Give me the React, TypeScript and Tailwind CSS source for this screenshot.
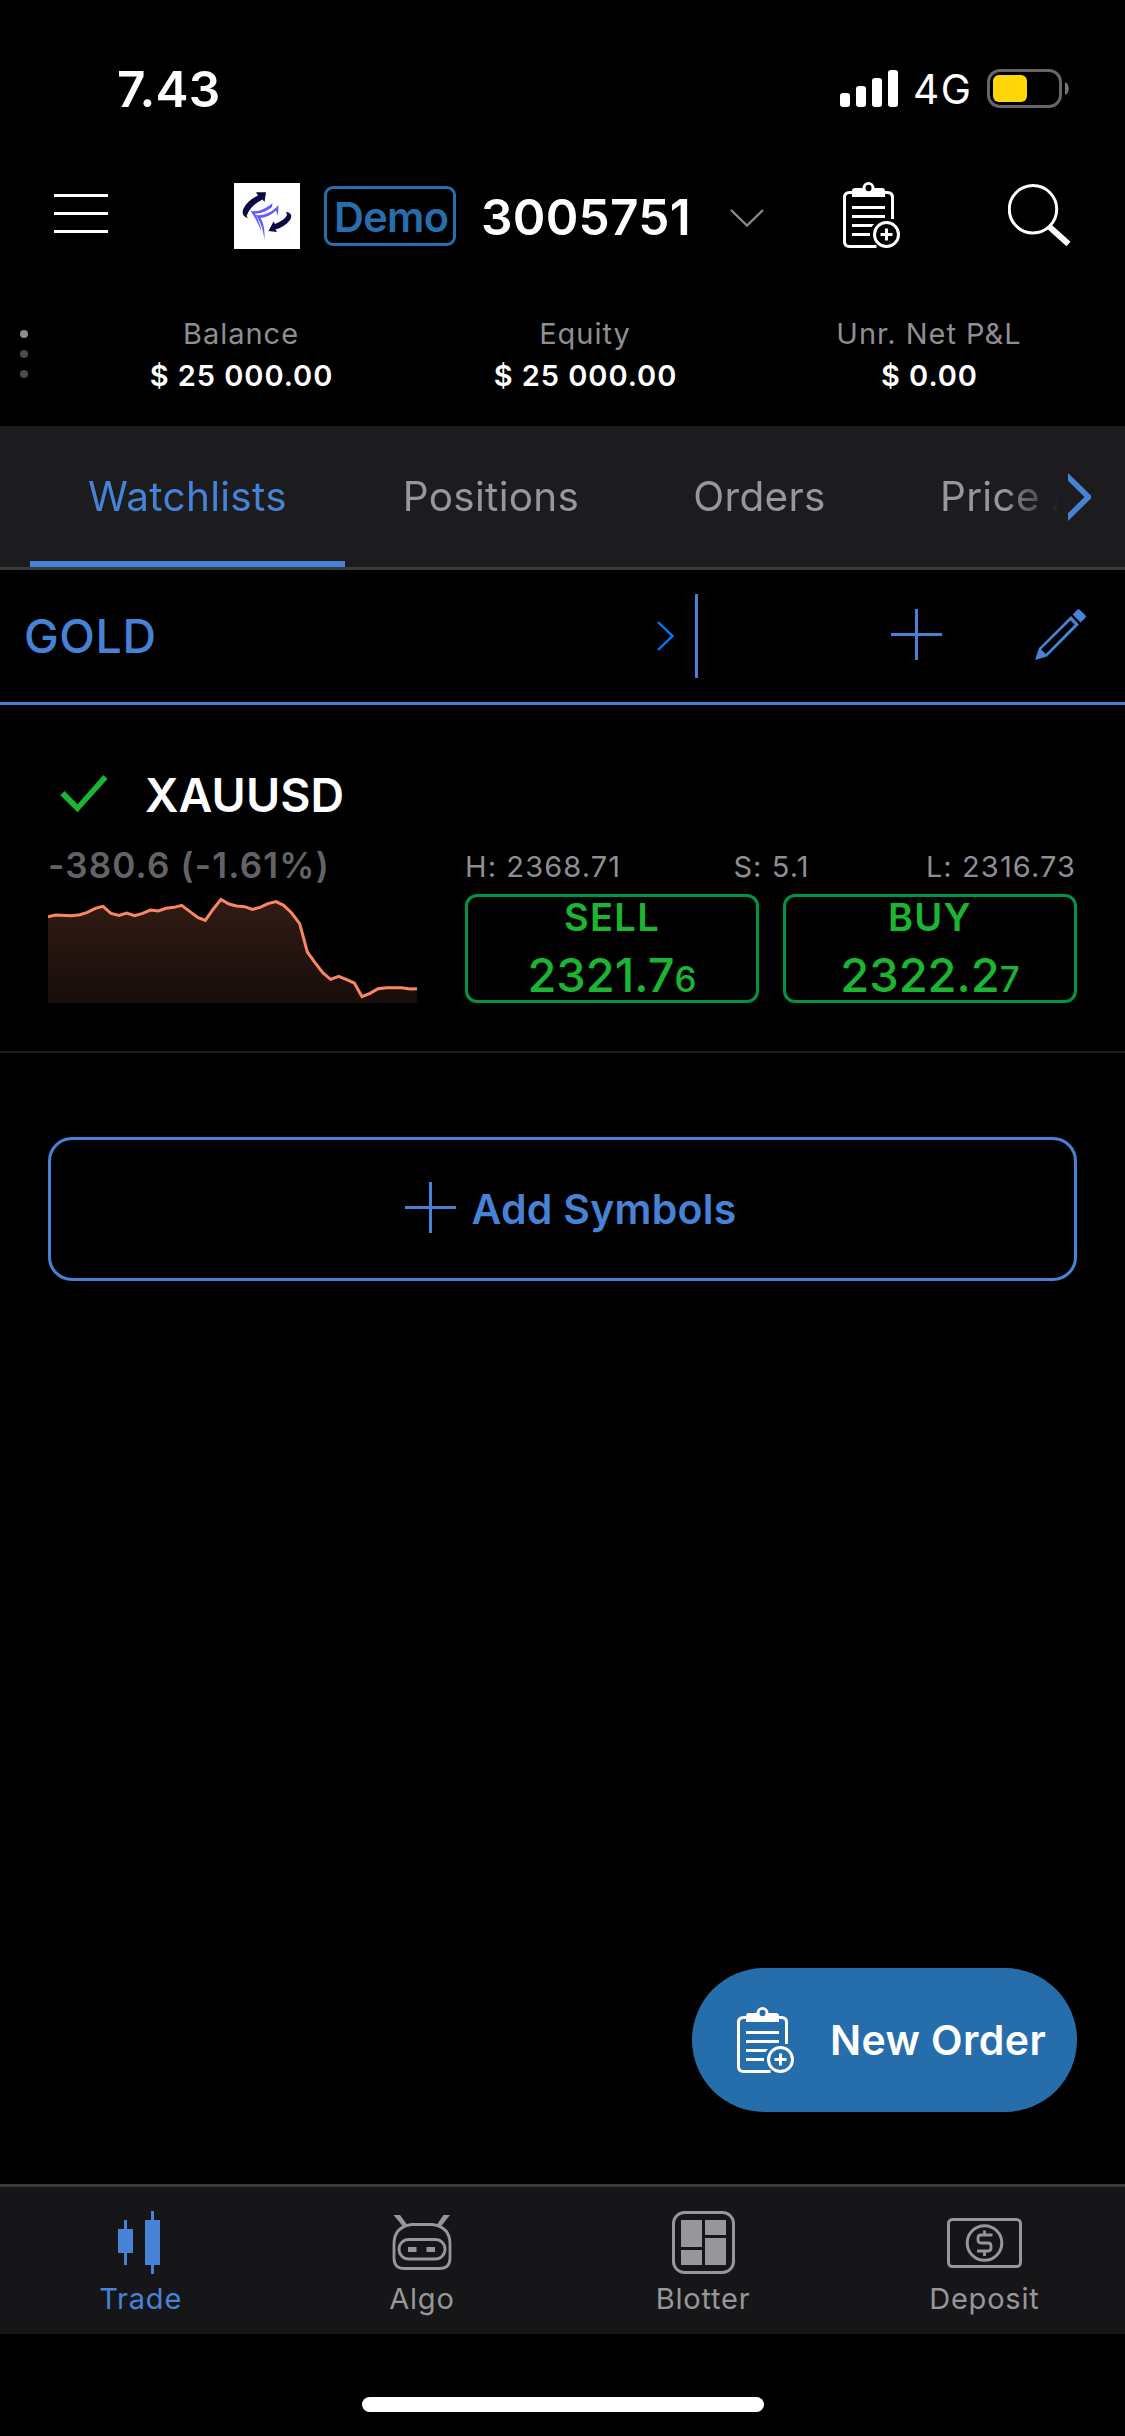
import type { ReactNode } from "react";

const accountInfo = [
    { label: "Balance", value: "$ 25 000.00" },
    { label: "Equity", value: "$ 25 000.00" },
    { label: "Unr. Net P&L", value: "$ 0.00" },
];

function ClipboardIcon() {
    return (
        <svg width="57" height="66" viewBox="0 0 57 66" fill="none" stroke="currentColor" strokeWidth="3" className="shrink-0">
            <path d="M9 10.5H6.5Q1.5 10.5 1.5 15.5V59.5Q1.5 64.5 6.5 64.5H33.5M42 10.5H44.5Q49.5 10.5 49.5 15.5V37" />
            <path d="M9 15V9Q9 6 12 6H39Q42 6 42 9V15Z" fill="currentColor" stroke="none" />
            <circle cx="25.5" cy="6" r="6" fill="currentColor" stroke="none" />
            <ellipse cx="25.5" cy="6" rx="3" ry="3.2" className="fill-black group-data-fab:fill-[#266dab]" stroke="none" />
            <path d="M9 25.5H42M9 34.5H42M9 52.5H27" />
            <path d="M9 42H31L28.5 45H9Z" fill="currentColor" stroke="none" />
            <circle cx="43.5" cy="52.5" r="12" />
            <path d="M37.5 52.5H49.5M43.5 46.5V58.5" />
        </svg>
    );
}

function PlusIcon() {
    return (
        <svg width="51" height="51" viewBox="0 0 51 51" stroke="currentColor" strokeWidth="3" className="mb-[3px] shrink-0">
            <path d="M0 25.5H51M25.5 0V51" />
        </svg>
    );
}

function BrokerLogo() {
    return (
        <svg width="66" height="66" viewBox="0 0 66 66" className="ml-[126px] shrink-0 bg-white">
            <path d="M22 9.3H32L30.5 19L28.5 16.5C20 21 15.5 26 13.5 31L12.5 33L14 35C9 34 7.5 30 9.5 25.5C12.5 19.5 18 15.5 24 12.5Z" fill="#0c0a45" />
            <path d="M34.5 48L39.5 38.5L41 41C47 38.5 52.5 35 53 31.5L52 29C57.5 29.5 58.5 33 56 37C52 42 47.5 45 41.5 46.5L43 49Z" fill="#0c0a45" />
            <path d="M16.5 28C24 29 31 26.5 38.5 20L38 24C33 28 28 30.5 21 30.5C24 36 26.5 42 27.5 49C24.5 41 21 34 16.5 28Z" fill="#635bff" />
            <path d="M21.5 32C31 33 38 29 44.5 22L44 33L42 27.5C37.5 32 32 34.5 26.5 35C29 39 31 45 30.5 57C29 46 26.5 38 21.5 32Z" fill="#635bff" />
        </svg>
    );
}

function StatusBar() {
    return (
        <div className="flex h-[177px] items-center pl-[117px]">
            <p className="mt-px w-[723px] text-[49.5px] font-semibold tracking-[0.2px]">7.43</p>
            <svg width="58" height="37" viewBox="0 0 58 37" fill="#fff">
                <rect x="0" y="23" width="10" height="14" rx="3" />
                <rect x="16" y="16" width="10" height="21" rx="3" />
                <rect x="32" y="8" width="10" height="29" rx="3" />
                <rect x="48" y="0" width="10" height="37" rx="3" />
            </svg>
            <p className="mt-[4px] ml-[15px] w-[74px] text-[40.5px] tracking-[1.5px]">4G</p>
            <svg width="82" height="39" viewBox="0 0 82 39">
                <rect x="1.5" y="1.5" width="72" height="36" rx="11.5" fill="none" stroke="#666" strokeWidth="3" />
                <rect x="6" y="6" width="34" height="27" rx="6" fill="#ffd60a" />
                <path d="M78 13C83 15 83 24 78 26Z" fill="#777" />
            </svg>
        </div>
    );
}

function Header() {
    return (
        <div className="flex h-[78px] items-center pl-[54px]">
            <div className="mb-[5px] flex w-[54px] flex-col gap-[15px]">
                <span className="h-[3px] bg-white" />
                <span className="h-[3px] bg-white" />
                <span className="h-[3px] bg-white" />
            </div>
            <BrokerLogo />
            <div className="ml-6 flex h-[60px] w-[132px] items-center rounded-[9px] border-[3px] border-[#276eac] pt-[2px] pl-[7px] text-[41.5px] font-semibold tracking-[-0.7px] text-[#276eac]">
                Demo
            </div>
            <p className="mt-[2px] ml-[25px] w-[249px] text-[49.5px] font-semibold tracking-[0.27px]">3005751</p>
            <svg width="34" height="18" viewBox="0 0 34 18" fill="none" stroke="#8a8a8a" strokeWidth="2.4" className="mt-[4px]">
                <path d="M1 1L17 16.5L33 1" />
            </svg>
            <div className="mb-[2px] ml-[79px]">
                <ClipboardIcon />
            </div>
            <svg width="63" height="62" viewBox="0 0 63 62" fill="none" stroke="#fff" className="mb-[2px] ml-[108px]">
                <circle cx="25" cy="25.3" r="23.7" strokeWidth="3" />
                <path d="M40.5 42L60.5 60" strokeWidth="6" />
            </svg>
        </div>
    );
}

function AccountInfo() {
    return (
        <div className="flex h-[171px]">
            <div className="mt-[75px] ml-5 flex w-[49px] flex-col gap-3">
                <span className="size-2 rounded-full bg-[#8e8e8e]" />
                <span className="size-2 rounded-full bg-[#4a4a4a]" />
                <span className="size-2 rounded-full bg-[#4a4a4a]" />
            </div>
            {accountInfo.map((item) => (
                <div key={item.label} className="flex w-[344px] flex-col gap-px pt-[58px] text-center text-[29px] leading-[41px]">
                    <p className="tracking-[1px] text-[#8e8e93]">{item.label}</p>
                    <p className="pl-px font-semibold tracking-[0.95px]">{item.value}</p>
                </div>
            ))}
        </div>
    );
}

function Tabs() {
    return (
        <div className="flex h-[144px] items-center border-b-[3px] border-[#3a3a3c] bg-[#1c1c1e] pl-[30px] text-[40.5px] tracking-[0.3px] text-[#96969b]">
            <div className="flex h-full w-[1032px] overflow-hidden whitespace-nowrap [mask-image:linear-gradient(to_right,black_975px,transparent_1030px)]">
                <div className="flex w-[315px] shrink-0 items-center justify-center border-b-[6px] border-[#4682d6] pt-[8px] text-[#4682d6]">Watchlists</div>
                <div className="flex w-[292px] shrink-0 items-center justify-center pt-[2px]">Positions</div>
                <div className="flex w-[245px] shrink-0 items-center justify-center pt-[2px]">Orders</div>
                <div className="flex shrink-0 items-center pt-[2px] pl-[58px]">Price Alerts</div>
            </div>
            <svg width="23" height="48" viewBox="0 0 23 48" fill="none" stroke="#4682d6" strokeWidth="5.5" className="ml-[6px]">
                <path d="M-3 1L20.5 24L-3 47" />
            </svg>
        </div>
    );
}

function WatchlistBar() {
    return (
        <div className="flex h-[135px] items-center border-b-[3px] border-[#4682d6] pl-[24px] text-[#4682d6]">
            <p className="mt-[2px] w-[633px] text-[46.5px] font-medium tracking-[0.6px]">GOLD</p>
            <svg width="17" height="30" viewBox="0 0 17 30" fill="none" stroke="#007aff" strokeWidth="2.4">
                <path d="M1 1L15.5 15L1 29" />
            </svg>
            <span className="ml-[21px] h-[84px] w-[3px] bg-[#4682d6]" />
            <div className="mr-[93px] ml-[193px]">
                <PlusIcon />
            </div>
            <svg width="51" height="51" viewBox="0 0 51 51" fill="currentColor" className="mb-[3px]">
                <path fillRule="evenodd" d="M0 51L4 39L36 7L44 15.5L12 47.5ZM6 40.5L10.8 45L39.6 15.5L35.5 11.5Z" />
                <path d="M37.6 5.5L42 1Q43.5 -0.5 45 1L50.3 6Q51.5 7.5 50.3 9L45.5 13.4Z" />
            </svg>
        </div>
    );
}

function Sparkline() {
    return (
        <svg width="369" height="109" viewBox="144 222 1107 327" fill="none">
            <defs>
                <linearGradient id="spark" x1="0" y1="0" x2="0" y2="1">
                    <stop offset="0" stopColor="#321b14" />
                    <stop offset="1" stopColor="#180d0a" />
                </linearGradient>
            </defs>
            <path
                d="M144 290L167 285L214 287L240 284L262 277L286 265L309 259L333 280L357 286L380 279L404 287L428 280L451 270L475 273L498 265L522 262L545 256L569 274L593 292L616 301L640 267L663 238L687 252L710 258L734 260L757 268L780 262L804 251L828 245L851 256L875 279L899 311L922 396L945 428L969 459L992 478L1016 469L1040 479L1063 489L1086 530L1110 520L1134 506L1160 503L1205 503L1230 507L1251 506V549H144Z"
                fill="url(#spark)"
            />
            <path
                d="M144 290L167 285L214 287L240 284L262 277L286 265L309 259L333 280L357 286L380 279L404 287L428 280L451 270L475 273L498 265L522 262L545 256L569 274L593 292L616 301L640 267L663 238L687 252L710 258L734 260L757 268L780 262L804 251L828 245L851 256L875 279L899 311L922 396L945 428L969 459L992 478L1016 469L1040 479L1063 489L1086 530L1110 520L1134 506L1160 503L1205 503L1230 507L1251 506"
                stroke="#f98762"
                strokeWidth="9"
            />
        </svg>
    );
}

function PriceButton({ side, price, pip }: { side: string; price: string; pip: string }) {
    return (
        <button className="flex h-[109px] w-[294px] flex-col items-center rounded-xl border-[3px] border-[#009445] text-[#1cb532]">
            <span className="text-[38px] leading-[40px] font-semibold tracking-[1.3px]">{side}</span>
            <span className="mt-[13px] text-[47px] leading-[49px] font-medium">
                {price}
                <span className="text-[35px]">{pip}</span>
            </span>
        </button>
    );
}

function SymbolCard() {
    return (
        <div className="h-[348px] border-b-2 border-[#1c1c1e] pt-[60px]">
            <div className="flex h-[60px] items-center pl-[60px]">
                <svg width="48" height="38" viewBox="0 0 48 38" fill="#1cb532" className="mb-[2px]">
                    <path d="M4.6 16L17.5 29.3L43.4 0L47.5 4L17.5 37.3L0.3 20.3Z" />
                </svg>
                <p className="mt-[2px] ml-[37px] text-[46.5px] font-semibold tracking-[0.1px]">XAUUSD</p>
            </div>
            <div className="flex px-12">
                <div className="w-[369px]">
                    <p className="flex h-[69px] items-center pt-[11px] text-[35px] font-semibold tracking-[1.2px] text-[#636366]">-380.6 (-1.61%)</p>
                    <Sparkline />
                </div>
                <div className="ml-12 w-[612px]">
                    <div className="flex h-[69px] items-center justify-between pt-[14px] pr-px text-[29px] tracking-[1.1px] text-[#8e8e93]">
                        <span>H: 2368.71</span>
                        <span className="pr-1">S: 5.1</span>
                        <span>L: 2316.73</span>
                    </div>
                    <div className="flex gap-6">
                        <PriceButton side="SELL" price="2321.7" pip="6" />
                        <PriceButton side="BUY" price="2322.2" pip="7" />
                    </div>
                </div>
            </div>
        </div>
    );
}

function NavItem({ label, active, children }: { label: string; active?: boolean; children: ReactNode }) {
    return (
        <div className={active ? "flex flex-1 flex-col items-center pt-6 text-[#4682d6]" : "flex flex-1 flex-col items-center pt-6 text-[#96969b]"}>
            <div className="flex h-[63px] items-center">{children}</div>
            <p className="mt-[7px] text-[29px] leading-[35px] tracking-[0.8px]">{label}</p>
        </div>
    );
}

function BottomNav() {
    return (
        <div className="flex h-[150px] border-t-[3px] border-[#3a3a3c] bg-[#161618]">
            <NavItem label="Trade" active>
                <svg width="42" height="63" viewBox="0 0 42 63" fill="currentColor" className="mr-[3px]">
                    <path d="M6 9H9V18H15V42H9V54H6V42H0V18H6ZM33 0H36V9H42V54H36V63H33V54H27V9H33Z" />
                </svg>
            </NavItem>
            <NavItem label="Algo">
                <svg width="60" height="55" viewBox="0 0 60 55" fill="none" stroke="currentColor" strokeWidth="2.8">
                    <path d="M19.5 9.5H40.5Q58 12 58 29V43Q58 53.5 47.5 53.5H12.5Q2 53.5 2 43V29Q2 12 19.5 9.5Z" />
                    <rect x="7" y="24.5" width="46" height="19.5" rx="9.75" />
                    <path d="M16 32H24.5V37H16ZM34.5 32H43V37H34.5ZM1.5 0H8L15 9.5L11.5 12ZM58 0H51.5L45 9.5L48.5 12Z" fill="currentColor" stroke="none" />
                </svg>
            </NavItem>
            <NavItem label="Blotter">
                <svg width="63" height="63" viewBox="0 0 63 63" fill="currentColor">
                    <rect x="1.5" y="1.5" width="60" height="60" rx="11" fill="none" stroke="currentColor" strokeWidth="3" />
                    <path d="M9 9H30V36H9ZM9 39H30V54H9ZM33 9H54V24H33ZM33 27H54V54H33Z" />
                </svg>
            </NavItem>
            <NavItem label="Deposit">
                <svg width="75" height="50" viewBox="0 0 75 50" fill="none" stroke="currentColor" strokeWidth="3">
                    <rect x="1.5" y="1.5" width="72" height="47" rx="4" />
                    <circle cx="37.5" cy="25" r="17.3" />
                    <path d="M45.5 17H34Q31 17 31 20V22Q31 25 34 25H41Q44 25 44 28V30Q44 33 41 33H30M37.5 12.5V17M37.5 33V38" strokeWidth="2.8" />
                </svg>
            </NavItem>
        </div>
    );
}

export default function App() {
    return (
        <div className="flex h-[2436px] w-[1125px] flex-col overflow-hidden bg-black font-['Inter',sans-serif] text-white">
            <StatusBar />
            <Header />
            <AccountInfo />
            <Tabs />
            <WatchlistBar />
            <SymbolCard />
            <button className="mx-12 mt-[84px] flex h-36 items-center justify-center gap-4 rounded-3xl border-[3px] border-[#4682d6] pl-4 text-[41px] font-semibold tracking-[0.25px] text-[#4682d6]">
                <PlusIcon />
                <span className="pt-px">Add Symbols</span>
            </button>
            <div className="flex flex-1 items-end justify-end pr-12 pb-[72px]">
                <button data-fab className="group flex h-36 w-[385px] items-center gap-9 rounded-full bg-[#266dab] pl-[45px] text-[41px] font-semibold tracking-[0.4px] whitespace-nowrap">
                    <ClipboardIcon />
                    <span className="pt-[2px]">New Order</span>
                </button>
            </div>
            <BottomNav />
            <div className="flex h-[102px] justify-center pt-[63px]">
                <span className="h-[15px] w-[402px] rounded-full bg-white" />
            </div>
        </div>
    );
}
